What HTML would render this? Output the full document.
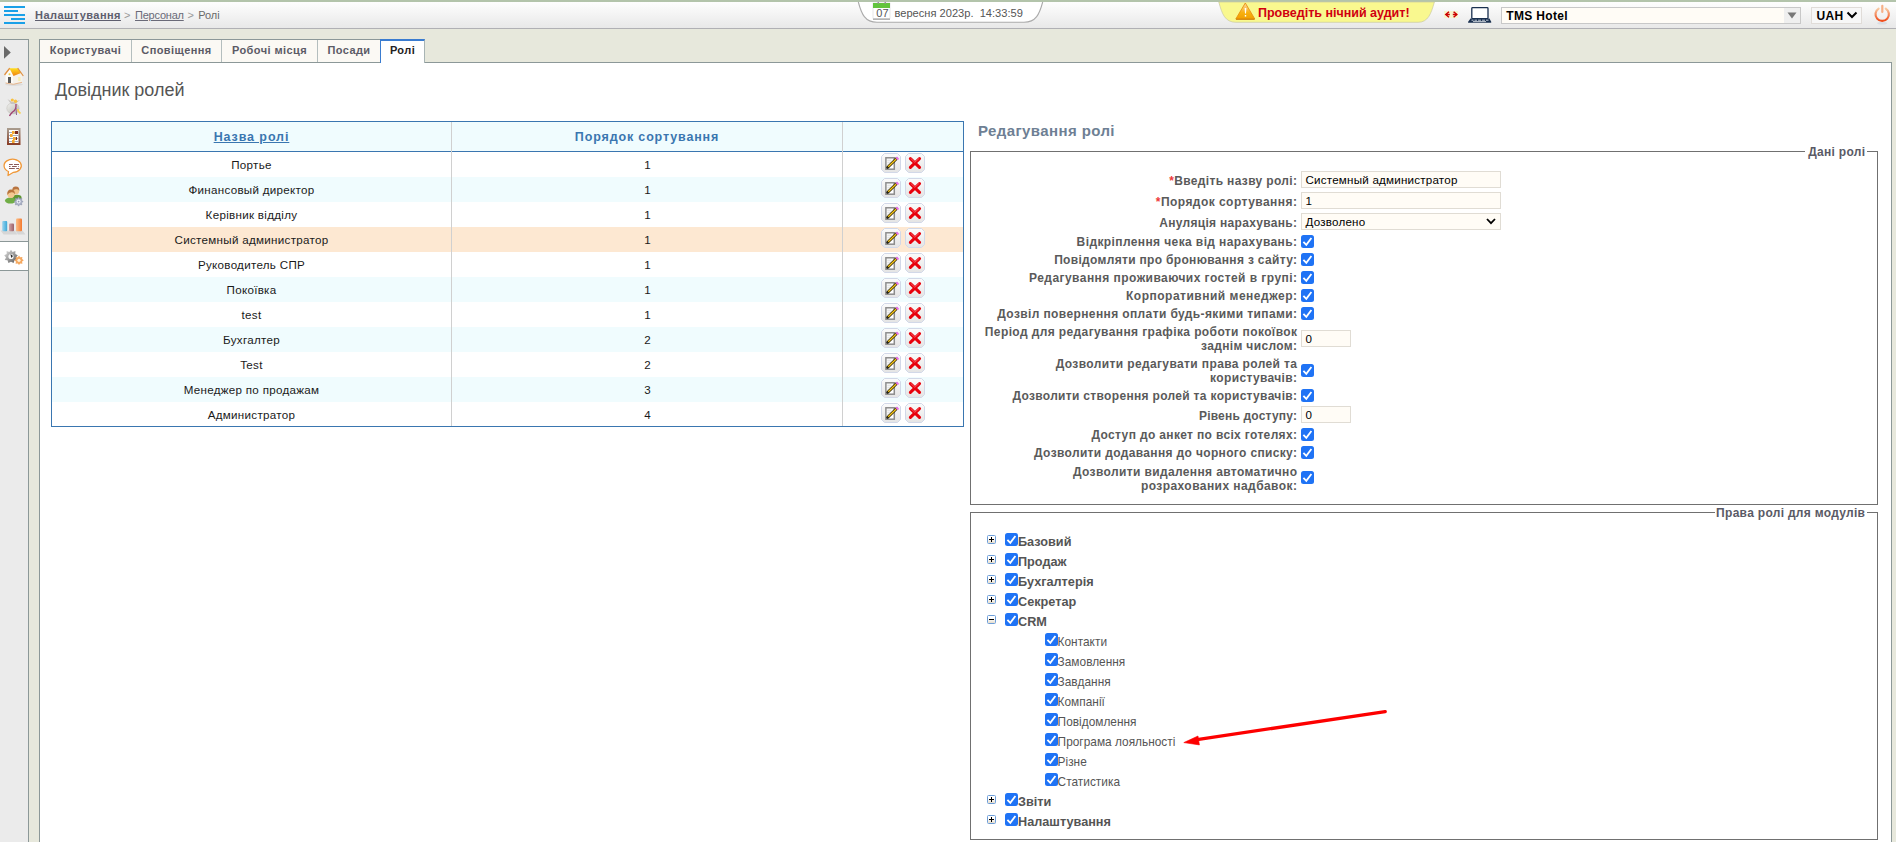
<!DOCTYPE html>
<html><head><meta charset="utf-8">
<style>
*{box-sizing:border-box}
html,body{margin:0;padding:0;width:1896px;height:842px;overflow:hidden;background:#e7e8dc;font-family:"Liberation Sans",sans-serif;position:relative}
.a{position:absolute}
.t{white-space:nowrap}
svg{display:block}
</style></head><body><svg width="0" height="0" style="position:absolute"><defs><linearGradient id="bg" x1="0" y1="0" x2="0" y2="1"><stop offset="0" stop-color="#fbfbfb"/><stop offset="1" stop-color="#e4e4e4"/></linearGradient></defs></svg>

<div class="a" style="left:0px;top:0px;width:1896px;height:2px;background:#b3c4ab"></div>
<div class="a" style="left:0px;top:2px;width:1896px;height:27px;background:linear-gradient(#fefefe,#e8e8e8);border-bottom:1px solid #b0b0b4"></div>
<div class="a" style="left:4px;top:6px;width:21px;height:2px;background:#1aa0e8"></div>
<div class="a" style="left:4px;top:10px;width:14px;height:2px;background:#1aa0e8"></div>
<div class="a" style="left:4px;top:14px;width:21px;height:2px;background:#1aa0e8"></div>
<div class="a" style="left:11px;top:18px;width:14px;height:2px;background:#1aa0e8"></div>
<div class="a" style="left:4px;top:22px;width:21px;height:2px;background:#1aa0e8"></div>
<div class="a t" style="top:9.69px;font-size:11px;line-height:11px;font-weight:700;color:#5e5e6e;letter-spacing:0.45px;left:35px;"><span style="text-decoration:underline">Налаштування</span></div>
<div class="a t" style="top:9.69px;font-size:11px;line-height:11px;font-weight:400;color:#999;left:124px;">&gt;</div>
<div class="a t" style="top:9.69px;font-size:11px;line-height:11px;font-weight:400;color:#6a6a78;letter-spacing:-0.22px;left:135px;"><span style="text-decoration:underline">Персонал</span></div>
<div class="a t" style="top:9.69px;font-size:11px;line-height:11px;font-weight:400;color:#999;left:187.5px;">&gt;</div>
<div class="a t" style="top:9.69px;font-size:11px;line-height:11px;font-weight:400;color:#6a6a6a;letter-spacing:-0.1px;left:198.3px;">Ролі</div>
<svg class="a" style="left:850px;top:0" width="200" height="26" viewBox="850 0 200 26"><path d="M858.3 2 C861.5 14, 865 22.3, 877 22.3 L1024 22.3 C1036 22.3, 1039.5 14, 1042.7 2" fill="#fff" stroke="#ababab" stroke-width="1.1"/></svg>
<svg class="a" style="left:871px;top:1px" width="22" height="21" viewBox="871 1 22 21"><rect x="873" y="18" width="17" height="1.5" fill="#6a6a6a"/><rect x="873" y="3" width="17" height="15.5" fill="#fff" stroke="#d8d8d8" stroke-width="0.6"/><rect x="873" y="3" width="17" height="5" fill="#62c43c"/><rect x="877.5" y="2" width="1.5" height="1.5" fill="#a090a8"/><rect x="884.5" y="2" width="1.5" height="1.5" fill="#a090a8"/></svg>
<div class="a t" style="top:7.69px;font-size:11px;line-height:11px;font-weight:400;color:#555;left:876.3px;">07</div>
<div class="a t" style="top:7.60px;font-size:11.1px;line-height:11.1px;font-weight:400;color:#555;left:894.5px;">вересня&nbsp;2023р.&nbsp;&nbsp;14:33:59</div>
<svg class="a" style="left:1210px;top:0" width="235" height="26" viewBox="1210 0 235 26"><path d="M1218.8 2 C1222 14, 1225 22.3, 1236 22.3 L1418 22.3 C1428 22.3, 1431 14, 1434.4 2 Z" fill="#f9f88f" stroke="#c8c8a0" stroke-width="0.7"/></svg>
<svg class="a" style="left:1234px;top:1px" width="23" height="20" viewBox="1234 1 23 20"><defs><linearGradient id="wtri" x1="0" y1="0" x2="0" y2="1"><stop offset="0" stop-color="#fcd8a8"/><stop offset="0.6" stop-color="#f8b010"/><stop offset="1" stop-color="#f0a000"/></linearGradient></defs><path d="M1245.3 3 L1254.8 19 L1235.8 19 Z" fill="url(#wtri)" stroke="#e89010" stroke-width="0.9" stroke-linejoin="round"/><path d="M1236 19.3 H1254.5" stroke="#c87800" stroke-width="0.9"/><path d="M1244.6 8 H1246.4 L1246 13.6 H1245 Z" fill="#fff"/><rect x="1244.8" y="15" width="1.4" height="1.6" fill="#fff"/></svg>
<div class="a t" style="top:7.42px;font-size:12.5px;line-height:12.5px;font-weight:700;color:#d00010;left:1258px;">Проведіть нічний аудит!</div>
<div class="a" style="left:1444px;top:11px;width:14px;height:7px;background:#f6f4cc"></div>
<svg class="a" style="left:1440px;top:8px" width="22" height="13" viewBox="1440 8 22 13"><path d="M1449 11.8 L1445.8 14.5 L1449 17.2 M1453.6 11.8 L1456.8 14.5 L1453.6 17.2" fill="none" stroke="#cc0000" stroke-width="1.5"/><path d="M1446 14.5 H1449.8 M1452.8 14.5 H1456.6" stroke="#cc0000" stroke-width="1.5"/></svg>
<svg class="a" style="left:1466px;top:5px" width="27" height="19" viewBox="1466 5 27 19"><rect x="1471.8" y="7.6" width="16.2" height="11" rx="0.8" fill="#fff" stroke="#1a3050" stroke-width="1.3"/><path d="M1470.5 18.6 L1489.5 18.6 L1491.3 22 Q1491.5 22.7 1490.6 22.7 L1468.6 22.7 Q1467.7 22.7 1468 22 Z" fill="#1a3050"/><path d="M1471.5 20.2 H1473.5 M1474.5 20.2 H1477 M1478 20.2 H1481 M1482 20.2 H1485 M1486 20.2 H1488.5 M1473 21.6 H1486" stroke="#e8eef4" stroke-width="0.8"/></svg>
<div class="a" style="left:1501px;top:7px;width:300px;height:17px;background:#fffcf6;border:1px solid #c8c8c8"></div>
<div class="a" style="left:1784px;top:8px;width:16px;height:15px;background:#efefef"></div>
<svg class="a" style="left:1787px;top:12px" width="10" height="7" viewBox="0 0 10 7"><path d="M0.5 0.5 L9.5 0.5 L5 6.5 Z" fill="#777"/></svg>
<div class="a t" style="top:10.34px;font-size:12px;line-height:12px;font-weight:700;color:#000;letter-spacing:0.33px;left:1506.3px;">TMS Hotel</div>
<div class="a" style="left:1811px;top:7px;width:51px;height:17px;background:#f7f7f7;border:1px solid #e0dcd8"></div>
<div class="a t" style="top:10.34px;font-size:12px;line-height:12px;font-weight:700;color:#000;letter-spacing:0.3px;left:1816.5px;">UAH</div>
<svg class="a" style="left:1846px;top:11px" width="12" height="9" viewBox="0 0 12 9"><path d="M1.5 1.5 L6 6 L10.5 1.5" fill="none" stroke="#000" stroke-width="2"/></svg>
<svg class="a" style="left:1872px;top:4px" width="21" height="22" viewBox="1872 4 21 22"><defs><linearGradient id="pw" x1="0" y1="0" x2="0" y2="1"><stop offset="0" stop-color="#f8c8a0"/><stop offset="1" stop-color="#f04a18"/></linearGradient></defs><ellipse cx="1882.2" cy="23.3" rx="5" ry="1.3" fill="#d8dde4"/><path d="M1878.6 8.6 A6.7 6.7 0 1 0 1885.8 8.6" fill="none" stroke="url(#pw)" stroke-width="2.2" stroke-linecap="round"/><path d="M1882.3 5.8 V12" stroke="#f6b088" stroke-width="2.2" stroke-linecap="round"/></svg>
<div class="a" style="left:0px;top:39px;width:29px;height:803px;background:#ebebeb;border-top:1px solid #8c9898;border-right:1px solid #8c9898"></div>
<div class="a" style="left:0px;top:241px;width:28px;height:30px;background:#fff;border-top:1px solid #8c9898;border-bottom:1px solid #8c9898"></div>
<svg class="a" style="left:0;top:39px" width="28" height="240" viewBox="0 39 28 240">
<defs>
<linearGradient id="roof" x1="0" y1="0" x2="0" y2="1"><stop offset="0" stop-color="#ffe020"/><stop offset="1" stop-color="#f08010"/></linearGradient>
<linearGradient id="frame" x1="0" y1="0" x2="0" y2="1"><stop offset="0" stop-color="#a89a8c"/><stop offset="1" stop-color="#8a4028"/></linearGradient>
<linearGradient id="bag" x1="0" y1="0" x2="1" y2="1"><stop offset="0" stop-color="#f2f2f0"/><stop offset="1" stop-color="#b8b8b0"/></linearGradient>
</defs>
<path d="M4 46 L10.8 52.4 L4 58.8 Z" fill="#6a6a6a"/>
<!-- house -->
<ellipse cx="14" cy="84.5" rx="9" ry="1.5" fill="#dcdcdc"/>
<path d="M5.5 74 L9.5 69 L13.5 75.5 L13.5 84 L5.5 82.5 Z" fill="#fdfcf8"/>
<path d="M13.5 75.5 L20.5 73.5 L22.5 75.5 L22.5 82 L13.5 84 Z" fill="#f6f2ea"/>
<path d="M4.8 74.5 L9.5 68.5" stroke="#e09040" stroke-width="1.3" stroke-linecap="round"/>
<path d="M9.5 68.2 L18 68.2 L21 73 L13.5 76 Z" fill="url(#roof)"/>
<path d="M18 68.5 L23 75.5" stroke="#e09040" stroke-width="1.2" stroke-linecap="round"/>
<path d="M5.5 83 L13.5 84.3 L22 82.3" fill="none" stroke="#e8b080" stroke-width="0.9"/>
<rect x="8" y="77" width="3" height="6" fill="#5a5a5a"/>
<rect x="18.2" y="77" width="2.3" height="4" fill="#f8eeb0"/>
<circle cx="9.5" cy="74.2" r="1" fill="#f0d040"/>
<!-- bag -->
<ellipse cx="13" cy="108.3" rx="6.2" ry="5.6" fill="url(#bag)" stroke="#c0beb8" stroke-width="0.5"/>
<path d="M7.5 99 L12 102 L14 102 L20 100 L15 104 L11 104 Z" fill="#c8c4c0"/>
<circle cx="12.3" cy="100" r="1.6" fill="#f8c040"/><circle cx="15.5" cy="101.2" r="1.7" fill="#f8c040"/>
<path d="M16 104 Q16.5 110 12.5 112 Q10.5 114 9.5 116" fill="none" stroke="#a04070" stroke-width="1.3"/>
<path d="M16 108 L16.5 115" stroke="#906090" stroke-width="1"/>
<path d="M17.6 109 Q18 112 20.5 113.5" fill="none" stroke="#f8d050" stroke-width="1.8"/>
<!-- abacus -->
<rect x="8" y="129" width="11.5" height="15" fill="#fff" stroke="url(#frame)" stroke-width="2"/>
<path d="M9 132.5 H18.5 M9 135.5 H18.5 M9 138.5 H18.5 M9 141.5 H18.5" stroke="#9aa6b8" stroke-width="0.9"/>
<rect x="12" y="131" width="2.6" height="3" fill="#f4a830"/><rect x="15" y="131" width="3" height="3" fill="#7a2a20"/>
<rect x="10" y="134" width="2.6" height="3" fill="#f4a830"/>
<rect x="13" y="137" width="2.6" height="3" fill="#f4a830"/><rect x="15.8" y="137" width="1.2" height="3" fill="#7a2a20"/>
<rect x="12" y="140" width="2.6" height="3" fill="#f4a830"/>
<!-- speech -->
<path d="M8.5 171.5 A8.6 6.6 0 1 1 13.5 172.3 L8 175.5 Z" fill="#fff" stroke="#f09838" stroke-width="1.3" stroke-linejoin="round"/>
<path d="M9 164.5 H12.8 M14 164.5 H19 M9 166.5 H10.5 M12 166.5 H16.8 M18.3 166.5 H19 M9 168.5 H14.8 M16.2 168.5 H19" stroke="#8a5a58" stroke-width="1"/>
<!-- users -->
<ellipse cx="17" cy="197.8" rx="4.6" ry="3" fill="#5f9632"/>
<circle cx="15.8" cy="191" r="3.4" fill="#f2c48a"/>
<path d="M12.3 191 Q12 186.6 15.8 186.6 Q19.6 186.6 19.3 191 Q18.5 189 16.5 189.3 Q14 189 12.3 191 Z" fill="#b87440"/>
<ellipse cx="10.4" cy="200.6" rx="5.4" ry="3" fill="#70ad45"/>
<circle cx="11" cy="194.3" r="3.6" fill="#f4c890"/>
<path d="M7.3 195 Q6.8 189.5 11 189.5 Q15.2 189.5 14.8 194.5 Q14 192 11.8 192.2 Q9 192 7.3 195 Z" fill="#b8743c"/>
<g transform="translate(18.6 201.6)"><path d="M0 -4.6 L1.2 -2.9 L3.3 -3.3 L2.9 -1.2 L4.6 0 L2.9 1.2 L3.3 3.3 L1.2 2.9 L0 4.6 L-1.2 2.9 L-3.3 3.3 L-2.9 1.2 L-4.6 0 L-2.9 -1.2 L-3.3 -3.3 L-1.2 -2.9 Z" fill="#a8aec4" stroke="#8890a8" stroke-width="0.5"/><circle r="2" fill="#eef0f6"/><circle r="0.9" fill="#9098b0"/></g>
<!-- chart -->
<linearGradient id="cb1" x1="0" x2="1"><stop offset="0" stop-color="#9ad4ee"/><stop offset="1" stop-color="#3aa8d8"/></linearGradient>
<linearGradient id="cb2" x1="0" x2="1"><stop offset="0" stop-color="#d0a4a8"/><stop offset="1" stop-color="#9a6068"/></linearGradient>
<linearGradient id="cb3" x1="0" x2="1"><stop offset="0" stop-color="#fcc088"/><stop offset="1" stop-color="#f47a30"/></linearGradient>
<path d="M0.5 230.5 L8 230.5 L11 234.5 L3.5 234.5 Z M8 230.5 L14.5 230.5 L17.5 234.5 L11 234.5 Z M15 230.5 L22.5 230.5 L25.5 234.5 L18 234.5 Z" fill="#d6d6d6"/>
<rect x="2.2" y="221" width="5" height="10.3" rx="1" fill="url(#cb1)"/>
<rect x="9" y="223.5" width="5" height="7.8" rx="1" fill="url(#cb2)"/>
<rect x="16" y="218.5" width="6" height="12.8" rx="1" fill="url(#cb3)"/>
<!-- gears -->
<linearGradient id="gg" x1="0" y1="0" x2="1" y2="1"><stop offset="0" stop-color="#e4e4e4"/><stop offset="1" stop-color="#555"/></linearGradient>
<g transform="translate(11 256.5)"><path d="M0 -6.8 L1.6 -4.6 L4.4 -5.4 L4.3 -2.6 L6.8 -1.2 L5 0.9 L6.3 3.5 L3.5 3.8 L2.6 6.5 L0 5.2 L-2.6 6.5 L-3.5 3.8 L-6.3 3.5 L-5 0.9 L-6.8 -1.2 L-4.3 -2.6 L-4.4 -5.4 L-1.6 -4.6 Z" fill="url(#gg)"/><circle r="2.6" fill="#f8f8f8"/><path d="M-0.5 -2.4 L2 -0.5 L0.3 1.5 Z" fill="#222"/></g>
<g transform="translate(19 260.3)"><path d="M0 -4.8 L1.2 -3.1 L3.4 -3.4 L3.1 -1.2 L4.8 0 L3.1 1.2 L3.4 3.4 L1.2 3.1 L0 4.8 L-1.2 3.1 L-3.4 3.4 L-3.1 1.2 L-4.8 0 L-3.1 -1.2 L-3.4 -3.4 L-1.2 -3.1 Z" fill="#f4a860"/><circle r="1.6" fill="#fff0d8"/></g>
</svg>
<div class="a" style="left:39px;top:62px;width:1853px;height:790px;background:#fff;border:1px solid #8c9898"></div>
<div class="a" style="left:39px;top:39px;width:341px;height:1px;background:#8c9898"></div>
<div class="a" style="left:39px;top:40px;width:93px;height:22px;background:#fbf9f4;border-left:1px solid #b4bebe;border-right:1px solid #b4bebe"></div>
<div class="a t" style="top:45.19px;font-size:11px;line-height:11px;font-weight:700;color:#5b5b66;letter-spacing:0.42px;left:-314.5px;width:800px;text-align:center;">Користувачі</div>
<div class="a" style="left:131px;top:40px;width:91px;height:22px;background:#fbf9f4;border-left:1px solid #b4bebe;border-right:1px solid #b4bebe"></div>
<div class="a t" style="top:45.19px;font-size:11px;line-height:11px;font-weight:700;color:#5b5b66;letter-spacing:0.42px;left:-223.5px;width:800px;text-align:center;">Сповіщення</div>
<div class="a" style="left:221px;top:40px;width:97px;height:22px;background:#fbf9f4;border-left:1px solid #b4bebe;border-right:1px solid #b4bebe"></div>
<div class="a t" style="top:45.19px;font-size:11px;line-height:11px;font-weight:700;color:#5b5b66;letter-spacing:0.42px;left:-130.5px;width:800px;text-align:center;">Робочі місця</div>
<div class="a" style="left:317px;top:40px;width:64px;height:22px;background:#fbf9f4;border-left:1px solid #b4bebe;border-right:1px solid #b4bebe"></div>
<div class="a t" style="top:45.19px;font-size:11px;line-height:11px;font-weight:700;color:#5b5b66;letter-spacing:0.42px;left:-51.0px;width:800px;text-align:center;">Посади</div>
<div class="a" style="left:39px;top:39px;width:1px;height:23px;background:#8c9898"></div>
<div class="a" style="left:380px;top:39px;width:45px;height:24px;background:#fff;border-left:1px solid #3a7cd0;border-right:1px solid #a8b4b4;border-top:2px solid #3a7cd0"></div>
<div class="a t" style="top:45.19px;font-size:11px;line-height:11px;font-weight:700;color:#222;letter-spacing:0.42px;left:2.5px;width:800px;text-align:center;">Ролі</div>
<div class="a t" style="top:80.76px;font-size:18px;line-height:18px;font-weight:400;color:#555;left:55px;">Довідник ролей</div>
<div class="a" style="left:51px;top:121px;width:913px;height:306px;border:1px solid #3a76b0;background:#fff"></div>
<div class="a" style="left:52px;top:122px;width:911px;height:29px;background:#f0fcfe"></div>
<div class="a" style="left:52px;top:151px;width:911px;height:1px;background:#3a76b0"></div>
<div class="a t" style="top:159.08px;font-size:11.6px;line-height:11.6px;font-weight:400;color:#1a1a1a;letter-spacing:0.3px;left:-148.5px;width:800px;text-align:center;">Портье</div>
<div class="a t" style="top:159.08px;font-size:11.6px;line-height:11.6px;font-weight:400;color:#1a1a1a;left:247.5px;width:800px;text-align:center;">1</div>
<div class="a" style="left:881px;top:153px"><svg width="20" height="20" viewBox="0 0 20 20"><path d="M3.5 0.5 H16.5 L19.5 3.5 V16.5 L16.5 19.5 H3.5 L0.5 16.5 V3.5 Z" fill="url(#bg)" stroke="#d2d8e8"/><rect x="4.9" y="4.8" width="8.4" height="11.4" fill="#fff" stroke="#8c8c8c" stroke-width="1.5"/><path d="M6.2 7.2 H10.5 M6.2 9.2 H10 M6.2 11.2 H8.5" stroke="#d0d0d0" stroke-width="0.8"/><path d="M6.8 14.2 L15.6 5.6" stroke="#2a2000" stroke-width="2.8" stroke-linecap="round"/><path d="M7.2 13.8 L15.2 6" stroke="#f8c818" stroke-width="1.3"/><path d="M15.2 4.2 L17.5 6.5" stroke="#e878e8" stroke-width="2.2"/><circle cx="6.3" cy="14.7" r="0.9" fill="#222"/></svg></div>
<div class="a" style="left:905px;top:153px"><svg width="20" height="20" viewBox="0 0 20 20"><path d="M3.5 0.5 H16.5 L19.5 3.5 V16.5 L16.5 19.5 H3.5 L0.5 16.5 V3.5 Z" fill="url(#bg)" stroke="#d2d8e8"/><path d="M5.4 5.6 L14.5 14.4 M14.5 5.6 L5.4 14.4" stroke="#e8000c" stroke-width="3.1" stroke-linecap="round"/><path d="M5.6 5.3 L9.8 9.3 L14.2 5.3" fill="none" stroke="#ff9aa0" stroke-width="0.8" opacity="0.7"/></svg></div>
<div class="a" style="left:52px;top:177px;width:911px;height:25px;background:#f0fcfe"></div>
<div class="a t" style="top:184.08px;font-size:11.6px;line-height:11.6px;font-weight:400;color:#1a1a1a;letter-spacing:0.3px;left:-148.5px;width:800px;text-align:center;">Финансовый директор</div>
<div class="a t" style="top:184.08px;font-size:11.6px;line-height:11.6px;font-weight:400;color:#1a1a1a;left:247.5px;width:800px;text-align:center;">1</div>
<div class="a" style="left:881px;top:178px"><svg width="20" height="20" viewBox="0 0 20 20"><path d="M3.5 0.5 H16.5 L19.5 3.5 V16.5 L16.5 19.5 H3.5 L0.5 16.5 V3.5 Z" fill="url(#bg)" stroke="#d2d8e8"/><rect x="4.9" y="4.8" width="8.4" height="11.4" fill="#fff" stroke="#8c8c8c" stroke-width="1.5"/><path d="M6.2 7.2 H10.5 M6.2 9.2 H10 M6.2 11.2 H8.5" stroke="#d0d0d0" stroke-width="0.8"/><path d="M6.8 14.2 L15.6 5.6" stroke="#2a2000" stroke-width="2.8" stroke-linecap="round"/><path d="M7.2 13.8 L15.2 6" stroke="#f8c818" stroke-width="1.3"/><path d="M15.2 4.2 L17.5 6.5" stroke="#e878e8" stroke-width="2.2"/><circle cx="6.3" cy="14.7" r="0.9" fill="#222"/></svg></div>
<div class="a" style="left:905px;top:178px"><svg width="20" height="20" viewBox="0 0 20 20"><path d="M3.5 0.5 H16.5 L19.5 3.5 V16.5 L16.5 19.5 H3.5 L0.5 16.5 V3.5 Z" fill="url(#bg)" stroke="#d2d8e8"/><path d="M5.4 5.6 L14.5 14.4 M14.5 5.6 L5.4 14.4" stroke="#e8000c" stroke-width="3.1" stroke-linecap="round"/><path d="M5.6 5.3 L9.8 9.3 L14.2 5.3" fill="none" stroke="#ff9aa0" stroke-width="0.8" opacity="0.7"/></svg></div>
<div class="a t" style="top:209.08px;font-size:11.6px;line-height:11.6px;font-weight:400;color:#1a1a1a;letter-spacing:0.3px;left:-148.5px;width:800px;text-align:center;">Керівник відділу</div>
<div class="a t" style="top:209.08px;font-size:11.6px;line-height:11.6px;font-weight:400;color:#1a1a1a;left:247.5px;width:800px;text-align:center;">1</div>
<div class="a" style="left:881px;top:203px"><svg width="20" height="20" viewBox="0 0 20 20"><path d="M3.5 0.5 H16.5 L19.5 3.5 V16.5 L16.5 19.5 H3.5 L0.5 16.5 V3.5 Z" fill="url(#bg)" stroke="#d2d8e8"/><rect x="4.9" y="4.8" width="8.4" height="11.4" fill="#fff" stroke="#8c8c8c" stroke-width="1.5"/><path d="M6.2 7.2 H10.5 M6.2 9.2 H10 M6.2 11.2 H8.5" stroke="#d0d0d0" stroke-width="0.8"/><path d="M6.8 14.2 L15.6 5.6" stroke="#2a2000" stroke-width="2.8" stroke-linecap="round"/><path d="M7.2 13.8 L15.2 6" stroke="#f8c818" stroke-width="1.3"/><path d="M15.2 4.2 L17.5 6.5" stroke="#e878e8" stroke-width="2.2"/><circle cx="6.3" cy="14.7" r="0.9" fill="#222"/></svg></div>
<div class="a" style="left:905px;top:203px"><svg width="20" height="20" viewBox="0 0 20 20"><path d="M3.5 0.5 H16.5 L19.5 3.5 V16.5 L16.5 19.5 H3.5 L0.5 16.5 V3.5 Z" fill="url(#bg)" stroke="#d2d8e8"/><path d="M5.4 5.6 L14.5 14.4 M14.5 5.6 L5.4 14.4" stroke="#e8000c" stroke-width="3.1" stroke-linecap="round"/><path d="M5.6 5.3 L9.8 9.3 L14.2 5.3" fill="none" stroke="#ff9aa0" stroke-width="0.8" opacity="0.7"/></svg></div>
<div class="a" style="left:52px;top:227px;width:911px;height:25px;background:#fde8d2"></div>
<div class="a t" style="top:234.08px;font-size:11.6px;line-height:11.6px;font-weight:400;color:#1a1a1a;letter-spacing:0.3px;left:-148.5px;width:800px;text-align:center;">Системный администратор</div>
<div class="a t" style="top:234.08px;font-size:11.6px;line-height:11.6px;font-weight:400;color:#1a1a1a;left:247.5px;width:800px;text-align:center;">1</div>
<div class="a" style="left:881px;top:228px"><svg width="20" height="20" viewBox="0 0 20 20"><path d="M3.5 0.5 H16.5 L19.5 3.5 V16.5 L16.5 19.5 H3.5 L0.5 16.5 V3.5 Z" fill="url(#bg)" stroke="#d2d8e8"/><rect x="4.9" y="4.8" width="8.4" height="11.4" fill="#fff" stroke="#8c8c8c" stroke-width="1.5"/><path d="M6.2 7.2 H10.5 M6.2 9.2 H10 M6.2 11.2 H8.5" stroke="#d0d0d0" stroke-width="0.8"/><path d="M6.8 14.2 L15.6 5.6" stroke="#2a2000" stroke-width="2.8" stroke-linecap="round"/><path d="M7.2 13.8 L15.2 6" stroke="#f8c818" stroke-width="1.3"/><path d="M15.2 4.2 L17.5 6.5" stroke="#e878e8" stroke-width="2.2"/><circle cx="6.3" cy="14.7" r="0.9" fill="#222"/></svg></div>
<div class="a" style="left:905px;top:228px"><svg width="20" height="20" viewBox="0 0 20 20"><path d="M3.5 0.5 H16.5 L19.5 3.5 V16.5 L16.5 19.5 H3.5 L0.5 16.5 V3.5 Z" fill="url(#bg)" stroke="#d2d8e8"/><path d="M5.4 5.6 L14.5 14.4 M14.5 5.6 L5.4 14.4" stroke="#e8000c" stroke-width="3.1" stroke-linecap="round"/><path d="M5.6 5.3 L9.8 9.3 L14.2 5.3" fill="none" stroke="#ff9aa0" stroke-width="0.8" opacity="0.7"/></svg></div>
<div class="a t" style="top:259.08px;font-size:11.6px;line-height:11.6px;font-weight:400;color:#1a1a1a;letter-spacing:0.3px;left:-148.5px;width:800px;text-align:center;">Руководитель СПР</div>
<div class="a t" style="top:259.08px;font-size:11.6px;line-height:11.6px;font-weight:400;color:#1a1a1a;left:247.5px;width:800px;text-align:center;">1</div>
<div class="a" style="left:881px;top:253px"><svg width="20" height="20" viewBox="0 0 20 20"><path d="M3.5 0.5 H16.5 L19.5 3.5 V16.5 L16.5 19.5 H3.5 L0.5 16.5 V3.5 Z" fill="url(#bg)" stroke="#d2d8e8"/><rect x="4.9" y="4.8" width="8.4" height="11.4" fill="#fff" stroke="#8c8c8c" stroke-width="1.5"/><path d="M6.2 7.2 H10.5 M6.2 9.2 H10 M6.2 11.2 H8.5" stroke="#d0d0d0" stroke-width="0.8"/><path d="M6.8 14.2 L15.6 5.6" stroke="#2a2000" stroke-width="2.8" stroke-linecap="round"/><path d="M7.2 13.8 L15.2 6" stroke="#f8c818" stroke-width="1.3"/><path d="M15.2 4.2 L17.5 6.5" stroke="#e878e8" stroke-width="2.2"/><circle cx="6.3" cy="14.7" r="0.9" fill="#222"/></svg></div>
<div class="a" style="left:905px;top:253px"><svg width="20" height="20" viewBox="0 0 20 20"><path d="M3.5 0.5 H16.5 L19.5 3.5 V16.5 L16.5 19.5 H3.5 L0.5 16.5 V3.5 Z" fill="url(#bg)" stroke="#d2d8e8"/><path d="M5.4 5.6 L14.5 14.4 M14.5 5.6 L5.4 14.4" stroke="#e8000c" stroke-width="3.1" stroke-linecap="round"/><path d="M5.6 5.3 L9.8 9.3 L14.2 5.3" fill="none" stroke="#ff9aa0" stroke-width="0.8" opacity="0.7"/></svg></div>
<div class="a" style="left:52px;top:277px;width:911px;height:25px;background:#f0fcfe"></div>
<div class="a t" style="top:284.08px;font-size:11.6px;line-height:11.6px;font-weight:400;color:#1a1a1a;letter-spacing:0.3px;left:-148.5px;width:800px;text-align:center;">Покоївка</div>
<div class="a t" style="top:284.08px;font-size:11.6px;line-height:11.6px;font-weight:400;color:#1a1a1a;left:247.5px;width:800px;text-align:center;">1</div>
<div class="a" style="left:881px;top:278px"><svg width="20" height="20" viewBox="0 0 20 20"><path d="M3.5 0.5 H16.5 L19.5 3.5 V16.5 L16.5 19.5 H3.5 L0.5 16.5 V3.5 Z" fill="url(#bg)" stroke="#d2d8e8"/><rect x="4.9" y="4.8" width="8.4" height="11.4" fill="#fff" stroke="#8c8c8c" stroke-width="1.5"/><path d="M6.2 7.2 H10.5 M6.2 9.2 H10 M6.2 11.2 H8.5" stroke="#d0d0d0" stroke-width="0.8"/><path d="M6.8 14.2 L15.6 5.6" stroke="#2a2000" stroke-width="2.8" stroke-linecap="round"/><path d="M7.2 13.8 L15.2 6" stroke="#f8c818" stroke-width="1.3"/><path d="M15.2 4.2 L17.5 6.5" stroke="#e878e8" stroke-width="2.2"/><circle cx="6.3" cy="14.7" r="0.9" fill="#222"/></svg></div>
<div class="a" style="left:905px;top:278px"><svg width="20" height="20" viewBox="0 0 20 20"><path d="M3.5 0.5 H16.5 L19.5 3.5 V16.5 L16.5 19.5 H3.5 L0.5 16.5 V3.5 Z" fill="url(#bg)" stroke="#d2d8e8"/><path d="M5.4 5.6 L14.5 14.4 M14.5 5.6 L5.4 14.4" stroke="#e8000c" stroke-width="3.1" stroke-linecap="round"/><path d="M5.6 5.3 L9.8 9.3 L14.2 5.3" fill="none" stroke="#ff9aa0" stroke-width="0.8" opacity="0.7"/></svg></div>
<div class="a t" style="top:309.08px;font-size:11.6px;line-height:11.6px;font-weight:400;color:#1a1a1a;letter-spacing:0.3px;left:-148.5px;width:800px;text-align:center;">test</div>
<div class="a t" style="top:309.08px;font-size:11.6px;line-height:11.6px;font-weight:400;color:#1a1a1a;left:247.5px;width:800px;text-align:center;">1</div>
<div class="a" style="left:881px;top:303px"><svg width="20" height="20" viewBox="0 0 20 20"><path d="M3.5 0.5 H16.5 L19.5 3.5 V16.5 L16.5 19.5 H3.5 L0.5 16.5 V3.5 Z" fill="url(#bg)" stroke="#d2d8e8"/><rect x="4.9" y="4.8" width="8.4" height="11.4" fill="#fff" stroke="#8c8c8c" stroke-width="1.5"/><path d="M6.2 7.2 H10.5 M6.2 9.2 H10 M6.2 11.2 H8.5" stroke="#d0d0d0" stroke-width="0.8"/><path d="M6.8 14.2 L15.6 5.6" stroke="#2a2000" stroke-width="2.8" stroke-linecap="round"/><path d="M7.2 13.8 L15.2 6" stroke="#f8c818" stroke-width="1.3"/><path d="M15.2 4.2 L17.5 6.5" stroke="#e878e8" stroke-width="2.2"/><circle cx="6.3" cy="14.7" r="0.9" fill="#222"/></svg></div>
<div class="a" style="left:905px;top:303px"><svg width="20" height="20" viewBox="0 0 20 20"><path d="M3.5 0.5 H16.5 L19.5 3.5 V16.5 L16.5 19.5 H3.5 L0.5 16.5 V3.5 Z" fill="url(#bg)" stroke="#d2d8e8"/><path d="M5.4 5.6 L14.5 14.4 M14.5 5.6 L5.4 14.4" stroke="#e8000c" stroke-width="3.1" stroke-linecap="round"/><path d="M5.6 5.3 L9.8 9.3 L14.2 5.3" fill="none" stroke="#ff9aa0" stroke-width="0.8" opacity="0.7"/></svg></div>
<div class="a" style="left:52px;top:327px;width:911px;height:25px;background:#f0fcfe"></div>
<div class="a t" style="top:334.08px;font-size:11.6px;line-height:11.6px;font-weight:400;color:#1a1a1a;letter-spacing:0.3px;left:-148.5px;width:800px;text-align:center;">Бухгалтер</div>
<div class="a t" style="top:334.08px;font-size:11.6px;line-height:11.6px;font-weight:400;color:#1a1a1a;left:247.5px;width:800px;text-align:center;">2</div>
<div class="a" style="left:881px;top:328px"><svg width="20" height="20" viewBox="0 0 20 20"><path d="M3.5 0.5 H16.5 L19.5 3.5 V16.5 L16.5 19.5 H3.5 L0.5 16.5 V3.5 Z" fill="url(#bg)" stroke="#d2d8e8"/><rect x="4.9" y="4.8" width="8.4" height="11.4" fill="#fff" stroke="#8c8c8c" stroke-width="1.5"/><path d="M6.2 7.2 H10.5 M6.2 9.2 H10 M6.2 11.2 H8.5" stroke="#d0d0d0" stroke-width="0.8"/><path d="M6.8 14.2 L15.6 5.6" stroke="#2a2000" stroke-width="2.8" stroke-linecap="round"/><path d="M7.2 13.8 L15.2 6" stroke="#f8c818" stroke-width="1.3"/><path d="M15.2 4.2 L17.5 6.5" stroke="#e878e8" stroke-width="2.2"/><circle cx="6.3" cy="14.7" r="0.9" fill="#222"/></svg></div>
<div class="a" style="left:905px;top:328px"><svg width="20" height="20" viewBox="0 0 20 20"><path d="M3.5 0.5 H16.5 L19.5 3.5 V16.5 L16.5 19.5 H3.5 L0.5 16.5 V3.5 Z" fill="url(#bg)" stroke="#d2d8e8"/><path d="M5.4 5.6 L14.5 14.4 M14.5 5.6 L5.4 14.4" stroke="#e8000c" stroke-width="3.1" stroke-linecap="round"/><path d="M5.6 5.3 L9.8 9.3 L14.2 5.3" fill="none" stroke="#ff9aa0" stroke-width="0.8" opacity="0.7"/></svg></div>
<div class="a t" style="top:359.08px;font-size:11.6px;line-height:11.6px;font-weight:400;color:#1a1a1a;letter-spacing:0.3px;left:-148.5px;width:800px;text-align:center;">Test</div>
<div class="a t" style="top:359.08px;font-size:11.6px;line-height:11.6px;font-weight:400;color:#1a1a1a;left:247.5px;width:800px;text-align:center;">2</div>
<div class="a" style="left:881px;top:353px"><svg width="20" height="20" viewBox="0 0 20 20"><path d="M3.5 0.5 H16.5 L19.5 3.5 V16.5 L16.5 19.5 H3.5 L0.5 16.5 V3.5 Z" fill="url(#bg)" stroke="#d2d8e8"/><rect x="4.9" y="4.8" width="8.4" height="11.4" fill="#fff" stroke="#8c8c8c" stroke-width="1.5"/><path d="M6.2 7.2 H10.5 M6.2 9.2 H10 M6.2 11.2 H8.5" stroke="#d0d0d0" stroke-width="0.8"/><path d="M6.8 14.2 L15.6 5.6" stroke="#2a2000" stroke-width="2.8" stroke-linecap="round"/><path d="M7.2 13.8 L15.2 6" stroke="#f8c818" stroke-width="1.3"/><path d="M15.2 4.2 L17.5 6.5" stroke="#e878e8" stroke-width="2.2"/><circle cx="6.3" cy="14.7" r="0.9" fill="#222"/></svg></div>
<div class="a" style="left:905px;top:353px"><svg width="20" height="20" viewBox="0 0 20 20"><path d="M3.5 0.5 H16.5 L19.5 3.5 V16.5 L16.5 19.5 H3.5 L0.5 16.5 V3.5 Z" fill="url(#bg)" stroke="#d2d8e8"/><path d="M5.4 5.6 L14.5 14.4 M14.5 5.6 L5.4 14.4" stroke="#e8000c" stroke-width="3.1" stroke-linecap="round"/><path d="M5.6 5.3 L9.8 9.3 L14.2 5.3" fill="none" stroke="#ff9aa0" stroke-width="0.8" opacity="0.7"/></svg></div>
<div class="a" style="left:52px;top:377px;width:911px;height:25px;background:#f0fcfe"></div>
<div class="a t" style="top:384.08px;font-size:11.6px;line-height:11.6px;font-weight:400;color:#1a1a1a;letter-spacing:0.3px;left:-148.5px;width:800px;text-align:center;">Менеджер по продажам</div>
<div class="a t" style="top:384.08px;font-size:11.6px;line-height:11.6px;font-weight:400;color:#1a1a1a;left:247.5px;width:800px;text-align:center;">3</div>
<div class="a" style="left:881px;top:378px"><svg width="20" height="20" viewBox="0 0 20 20"><path d="M3.5 0.5 H16.5 L19.5 3.5 V16.5 L16.5 19.5 H3.5 L0.5 16.5 V3.5 Z" fill="url(#bg)" stroke="#d2d8e8"/><rect x="4.9" y="4.8" width="8.4" height="11.4" fill="#fff" stroke="#8c8c8c" stroke-width="1.5"/><path d="M6.2 7.2 H10.5 M6.2 9.2 H10 M6.2 11.2 H8.5" stroke="#d0d0d0" stroke-width="0.8"/><path d="M6.8 14.2 L15.6 5.6" stroke="#2a2000" stroke-width="2.8" stroke-linecap="round"/><path d="M7.2 13.8 L15.2 6" stroke="#f8c818" stroke-width="1.3"/><path d="M15.2 4.2 L17.5 6.5" stroke="#e878e8" stroke-width="2.2"/><circle cx="6.3" cy="14.7" r="0.9" fill="#222"/></svg></div>
<div class="a" style="left:905px;top:378px"><svg width="20" height="20" viewBox="0 0 20 20"><path d="M3.5 0.5 H16.5 L19.5 3.5 V16.5 L16.5 19.5 H3.5 L0.5 16.5 V3.5 Z" fill="url(#bg)" stroke="#d2d8e8"/><path d="M5.4 5.6 L14.5 14.4 M14.5 5.6 L5.4 14.4" stroke="#e8000c" stroke-width="3.1" stroke-linecap="round"/><path d="M5.6 5.3 L9.8 9.3 L14.2 5.3" fill="none" stroke="#ff9aa0" stroke-width="0.8" opacity="0.7"/></svg></div>
<div class="a t" style="top:409.08px;font-size:11.6px;line-height:11.6px;font-weight:400;color:#1a1a1a;letter-spacing:0.3px;left:-148.5px;width:800px;text-align:center;">Администратор</div>
<div class="a t" style="top:409.08px;font-size:11.6px;line-height:11.6px;font-weight:400;color:#1a1a1a;left:247.5px;width:800px;text-align:center;">4</div>
<div class="a" style="left:881px;top:403px"><svg width="20" height="20" viewBox="0 0 20 20"><path d="M3.5 0.5 H16.5 L19.5 3.5 V16.5 L16.5 19.5 H3.5 L0.5 16.5 V3.5 Z" fill="url(#bg)" stroke="#d2d8e8"/><rect x="4.9" y="4.8" width="8.4" height="11.4" fill="#fff" stroke="#8c8c8c" stroke-width="1.5"/><path d="M6.2 7.2 H10.5 M6.2 9.2 H10 M6.2 11.2 H8.5" stroke="#d0d0d0" stroke-width="0.8"/><path d="M6.8 14.2 L15.6 5.6" stroke="#2a2000" stroke-width="2.8" stroke-linecap="round"/><path d="M7.2 13.8 L15.2 6" stroke="#f8c818" stroke-width="1.3"/><path d="M15.2 4.2 L17.5 6.5" stroke="#e878e8" stroke-width="2.2"/><circle cx="6.3" cy="14.7" r="0.9" fill="#222"/></svg></div>
<div class="a" style="left:905px;top:403px"><svg width="20" height="20" viewBox="0 0 20 20"><path d="M3.5 0.5 H16.5 L19.5 3.5 V16.5 L16.5 19.5 H3.5 L0.5 16.5 V3.5 Z" fill="url(#bg)" stroke="#d2d8e8"/><path d="M5.4 5.6 L14.5 14.4 M14.5 5.6 L5.4 14.4" stroke="#e8000c" stroke-width="3.1" stroke-linecap="round"/><path d="M5.6 5.3 L9.8 9.3 L14.2 5.3" fill="none" stroke="#ff9aa0" stroke-width="0.8" opacity="0.7"/></svg></div>
<div class="a" style="left:451px;top:122px;width:1px;height:304px;background:#d0d0d0"></div>
<div class="a" style="left:842px;top:122px;width:1px;height:304px;background:#d0d0d0"></div>
<div class="a t" style="top:131.42px;font-size:12.5px;line-height:12.5px;font-weight:700;color:#3a76b0;letter-spacing:0.9px;left:-148.5px;width:800px;text-align:center;"><span style="text-decoration:underline">Назва ролі</span></div>
<div class="a t" style="top:131.42px;font-size:12.5px;line-height:12.5px;font-weight:700;color:#3a76b0;letter-spacing:0.85px;left:247px;width:800px;text-align:center;">Порядок сортування</div>
<div class="a t" style="top:123.30px;font-size:15px;line-height:15px;font-weight:700;color:#6e7f94;letter-spacing:0.4px;left:978px;">Редагування ролі</div>
<div class="a" style="left:970px;top:151px;width:908px;height:354px;border:1px solid #707070"></div>
<div class="a" style="left:1805px;top:146px;width:62px;height:12px;background:#fff"></div>
<div class="a t" style="top:145.84px;font-size:12px;line-height:12px;font-weight:700;color:#5a5a66;letter-spacing:0.3px;right:31px;margin-right:-0.3px;">Дані ролі</div>
<div class="a t" style="top:174.84px;font-size:12px;line-height:12px;font-weight:700;color:#5a5a5a;letter-spacing:0.35px;right:599px;margin-right:-0.35px;"><span style="color:#ee3a3a">*</span>Введіть назву ролі:</div>
<div class="a" style="left:1301px;top:171px;width:200px;height:17px;background:#fffcf6;border:1px solid #e0dcd4"></div>
<div class="a t" style="top:174.08px;font-size:11.6px;line-height:11.6px;font-weight:400;color:#000;letter-spacing:0.22px;left:1305.5px;">Системный администратор</div>
<div class="a t" style="top:195.84px;font-size:12px;line-height:12px;font-weight:700;color:#5a5a5a;letter-spacing:0.46px;right:599px;margin-right:-0.46px;"><span style="color:#ee3a3a">*</span>Порядок сортування:</div>
<div class="a" style="left:1301px;top:192px;width:200px;height:17px;background:#fffcf6;border:1px solid #e0dcd4"></div>
<div class="a t" style="top:195.08px;font-size:11.6px;line-height:11.6px;font-weight:400;color:#000;letter-spacing:0.22px;left:1305.5px;">1</div>
<div class="a t" style="top:216.84px;font-size:12px;line-height:12px;font-weight:700;color:#5a5a5a;letter-spacing:0.3px;right:599px;margin-right:-0.3px;">Ануляція нарахувань:</div>
<div class="a" style="left:1301px;top:213px;width:200px;height:17px;background:#fffcf6;border:1px solid #e0dcd4"></div>
<div class="a t" style="top:216.08px;font-size:11.6px;line-height:11.6px;font-weight:400;color:#000;letter-spacing:0.22px;left:1305.5px;">Дозволено</div>
<svg class="a" style="left:1486px;top:218px" width="10" height="7" viewBox="0 0 10 7"><path d="M1 1 L5 5.2 L9 1" fill="none" stroke="#000" stroke-width="1.8"/></svg>
<div class="a t" style="top:235.84px;font-size:12px;line-height:12px;font-weight:700;color:#5a5a5a;letter-spacing:0.395px;right:599px;margin-right:-0.395px;">Відкріплення чека від нарахувань:</div>
<div class="a" style="left:1301px;top:235px;width:13px;height:13px"><svg width="13" height="13" viewBox="0 0 13 13"><rect x="0" y="0" width="13" height="13" rx="2.5" fill="#1f73f5"/><path d="M2.4 6.9 L5.3 9.9 L10.4 3" fill="none" stroke="#fff" stroke-width="1.8"/></svg></div>
<div class="a t" style="top:253.84px;font-size:12px;line-height:12px;font-weight:700;color:#5a5a5a;letter-spacing:0.32px;right:599px;margin-right:-0.32px;">Повідомляти про бронювання з сайту:</div>
<div class="a" style="left:1301px;top:253px;width:13px;height:13px"><svg width="13" height="13" viewBox="0 0 13 13"><rect x="0" y="0" width="13" height="13" rx="2.5" fill="#1f73f5"/><path d="M2.4 6.9 L5.3 9.9 L10.4 3" fill="none" stroke="#fff" stroke-width="1.8"/></svg></div>
<div class="a t" style="top:271.84px;font-size:12px;line-height:12px;font-weight:700;color:#5a5a5a;letter-spacing:0.45px;right:599px;margin-right:-0.45px;">Редагування проживаючих гостей в групі:</div>
<div class="a" style="left:1301px;top:271px;width:13px;height:13px"><svg width="13" height="13" viewBox="0 0 13 13"><rect x="0" y="0" width="13" height="13" rx="2.5" fill="#1f73f5"/><path d="M2.4 6.9 L5.3 9.9 L10.4 3" fill="none" stroke="#fff" stroke-width="1.8"/></svg></div>
<div class="a t" style="top:289.84px;font-size:12px;line-height:12px;font-weight:700;color:#5a5a5a;letter-spacing:0.5px;right:599px;margin-right:-0.5px;">Корпоративний менеджер:</div>
<div class="a" style="left:1301px;top:289px;width:13px;height:13px"><svg width="13" height="13" viewBox="0 0 13 13"><rect x="0" y="0" width="13" height="13" rx="2.5" fill="#1f73f5"/><path d="M2.4 6.9 L5.3 9.9 L10.4 3" fill="none" stroke="#fff" stroke-width="1.8"/></svg></div>
<div class="a t" style="top:307.84px;font-size:12px;line-height:12px;font-weight:700;color:#5a5a5a;letter-spacing:0.385px;right:599px;margin-right:-0.385px;">Дозвіл повернення оплати будь-якими типами:</div>
<div class="a" style="left:1301px;top:307px;width:13px;height:13px"><svg width="13" height="13" viewBox="0 0 13 13"><rect x="0" y="0" width="13" height="13" rx="2.5" fill="#1f73f5"/><path d="M2.4 6.9 L5.3 9.9 L10.4 3" fill="none" stroke="#fff" stroke-width="1.8"/></svg></div>
<div class="a t" style="top:325.84px;font-size:12px;line-height:12px;font-weight:700;color:#5a5a5a;letter-spacing:0.39px;right:599px;margin-right:-0.39px;">Період для редагування графіка роботи покоївок</div>
<div class="a t" style="top:339.84px;font-size:12px;line-height:12px;font-weight:700;color:#5a5a5a;letter-spacing:0.35px;right:599px;margin-right:-0.35px;">заднім числом:</div>
<div class="a" style="left:1301px;top:330px;width:50px;height:17px;background:#fffcf6;border:1px solid #e0dcd4"></div>
<div class="a t" style="top:333.08px;font-size:11.6px;line-height:11.6px;font-weight:400;color:#000;letter-spacing:0.22px;left:1305.5px;">0</div>
<div class="a t" style="top:357.84px;font-size:12px;line-height:12px;font-weight:700;color:#5a5a5a;letter-spacing:0.38px;right:599px;margin-right:-0.38px;">Дозволити редагувати права ролей та</div>
<div class="a t" style="top:371.84px;font-size:12px;line-height:12px;font-weight:700;color:#5a5a5a;letter-spacing:0.35px;right:599px;margin-right:-0.35px;">користувачів:</div>
<div class="a" style="left:1301px;top:364px;width:13px;height:13px"><svg width="13" height="13" viewBox="0 0 13 13"><rect x="0" y="0" width="13" height="13" rx="2.5" fill="#1f73f5"/><path d="M2.4 6.9 L5.3 9.9 L10.4 3" fill="none" stroke="#fff" stroke-width="1.8"/></svg></div>
<div class="a t" style="top:389.84px;font-size:12px;line-height:12px;font-weight:700;color:#5a5a5a;letter-spacing:0.32px;right:599px;margin-right:-0.32px;">Дозволити створення ролей та користувачів:</div>
<div class="a" style="left:1301px;top:389px;width:13px;height:13px"><svg width="13" height="13" viewBox="0 0 13 13"><rect x="0" y="0" width="13" height="13" rx="2.5" fill="#1f73f5"/><path d="M2.4 6.9 L5.3 9.9 L10.4 3" fill="none" stroke="#fff" stroke-width="1.8"/></svg></div>
<div class="a t" style="top:409.84px;font-size:12px;line-height:12px;font-weight:700;color:#5a5a5a;letter-spacing:0.2px;right:599px;margin-right:-0.2px;">Рівень доступу:</div>
<div class="a" style="left:1301px;top:406px;width:50px;height:17px;background:#fffcf6;border:1px solid #e0dcd4"></div>
<div class="a t" style="top:409.08px;font-size:11.6px;line-height:11.6px;font-weight:400;color:#000;letter-spacing:0.22px;left:1305.5px;">0</div>
<div class="a t" style="top:428.84px;font-size:12px;line-height:12px;font-weight:700;color:#5a5a5a;letter-spacing:0.35px;right:599px;margin-right:-0.35px;">Доступ до анкет по всіх готелях:</div>
<div class="a" style="left:1301px;top:428px;width:13px;height:13px"><svg width="13" height="13" viewBox="0 0 13 13"><rect x="0" y="0" width="13" height="13" rx="2.5" fill="#1f73f5"/><path d="M2.4 6.9 L5.3 9.9 L10.4 3" fill="none" stroke="#fff" stroke-width="1.8"/></svg></div>
<div class="a t" style="top:446.84px;font-size:12px;line-height:12px;font-weight:700;color:#5a5a5a;letter-spacing:0.35px;right:599px;margin-right:-0.35px;">Дозволити додавання до чорного списку:</div>
<div class="a" style="left:1301px;top:446px;width:13px;height:13px"><svg width="13" height="13" viewBox="0 0 13 13"><rect x="0" y="0" width="13" height="13" rx="2.5" fill="#1f73f5"/><path d="M2.4 6.9 L5.3 9.9 L10.4 3" fill="none" stroke="#fff" stroke-width="1.8"/></svg></div>
<div class="a t" style="top:465.84px;font-size:12px;line-height:12px;font-weight:700;color:#5a5a5a;letter-spacing:0.38px;right:599px;margin-right:-0.38px;">Дозволити видалення автоматично</div>
<div class="a t" style="top:479.84px;font-size:12px;line-height:12px;font-weight:700;color:#5a5a5a;letter-spacing:0.44px;right:599px;margin-right:-0.44px;">розрахованих надбавок:</div>
<div class="a" style="left:1301px;top:471px;width:13px;height:13px"><svg width="13" height="13" viewBox="0 0 13 13"><rect x="0" y="0" width="13" height="13" rx="2.5" fill="#1f73f5"/><path d="M2.4 6.9 L5.3 9.9 L10.4 3" fill="none" stroke="#fff" stroke-width="1.8"/></svg></div>
<div class="a" style="left:970px;top:512px;width:908px;height:328px;border:1px solid #707070"></div>
<div class="a" style="left:1715px;top:506px;width:152px;height:12px;background:#fff"></div>
<div class="a t" style="top:506.84px;font-size:12px;line-height:12px;font-weight:700;color:#5a5a66;letter-spacing:0.3px;right:31px;margin-right:-0.3px;">Права ролі для модулів</div>
<div class="a" style="left:987px;top:535px;width:9px;height:9px;background:linear-gradient(#fff 40%,#e4dccc);border:1px solid #6e9ed8;border-radius:1.5px"></div>
<div class="a" style="left:989px;top:539px;width:5px;height:1px;background:#000"></div>
<div class="a" style="left:991px;top:537px;width:1px;height:5px;background:#000"></div>
<div class="a" style="left:1005px;top:533px;width:13px;height:13px"><svg width="13" height="13" viewBox="0 0 13 13"><rect x="0" y="0" width="13" height="13" rx="2.5" fill="#1f73f5"/><path d="M2.4 6.9 L5.3 9.9 L10.4 3" fill="none" stroke="#fff" stroke-width="1.8"/></svg></div>
<div class="a t" style="top:536.25px;font-size:12.7px;line-height:12.7px;font-weight:700;color:#555;left:1018px;">Базовий</div>
<div class="a" style="left:987px;top:555px;width:9px;height:9px;background:linear-gradient(#fff 40%,#e4dccc);border:1px solid #6e9ed8;border-radius:1.5px"></div>
<div class="a" style="left:989px;top:559px;width:5px;height:1px;background:#000"></div>
<div class="a" style="left:991px;top:557px;width:1px;height:5px;background:#000"></div>
<div class="a" style="left:1005px;top:553px;width:13px;height:13px"><svg width="13" height="13" viewBox="0 0 13 13"><rect x="0" y="0" width="13" height="13" rx="2.5" fill="#1f73f5"/><path d="M2.4 6.9 L5.3 9.9 L10.4 3" fill="none" stroke="#fff" stroke-width="1.8"/></svg></div>
<div class="a t" style="top:556.25px;font-size:12.7px;line-height:12.7px;font-weight:700;color:#555;left:1018px;">Продаж</div>
<div class="a" style="left:987px;top:575px;width:9px;height:9px;background:linear-gradient(#fff 40%,#e4dccc);border:1px solid #6e9ed8;border-radius:1.5px"></div>
<div class="a" style="left:989px;top:579px;width:5px;height:1px;background:#000"></div>
<div class="a" style="left:991px;top:577px;width:1px;height:5px;background:#000"></div>
<div class="a" style="left:1005px;top:573px;width:13px;height:13px"><svg width="13" height="13" viewBox="0 0 13 13"><rect x="0" y="0" width="13" height="13" rx="2.5" fill="#1f73f5"/><path d="M2.4 6.9 L5.3 9.9 L10.4 3" fill="none" stroke="#fff" stroke-width="1.8"/></svg></div>
<div class="a t" style="top:576.25px;font-size:12.7px;line-height:12.7px;font-weight:700;color:#555;left:1018px;">Бухгалтерія</div>
<div class="a" style="left:987px;top:595px;width:9px;height:9px;background:linear-gradient(#fff 40%,#e4dccc);border:1px solid #6e9ed8;border-radius:1.5px"></div>
<div class="a" style="left:989px;top:599px;width:5px;height:1px;background:#000"></div>
<div class="a" style="left:991px;top:597px;width:1px;height:5px;background:#000"></div>
<div class="a" style="left:1005px;top:593px;width:13px;height:13px"><svg width="13" height="13" viewBox="0 0 13 13"><rect x="0" y="0" width="13" height="13" rx="2.5" fill="#1f73f5"/><path d="M2.4 6.9 L5.3 9.9 L10.4 3" fill="none" stroke="#fff" stroke-width="1.8"/></svg></div>
<div class="a t" style="top:596.25px;font-size:12.7px;line-height:12.7px;font-weight:700;color:#555;left:1018px;">Секретар</div>
<div class="a" style="left:987px;top:615px;width:9px;height:9px;background:linear-gradient(#fff 40%,#e4dccc);border:1px solid #6e9ed8;border-radius:1.5px"></div>
<div class="a" style="left:989px;top:619px;width:5px;height:1px;background:#000"></div>
<div class="a" style="left:1005px;top:613px;width:13px;height:13px"><svg width="13" height="13" viewBox="0 0 13 13"><rect x="0" y="0" width="13" height="13" rx="2.5" fill="#1f73f5"/><path d="M2.4 6.9 L5.3 9.9 L10.4 3" fill="none" stroke="#fff" stroke-width="1.8"/></svg></div>
<div class="a t" style="top:616.25px;font-size:12.7px;line-height:12.7px;font-weight:700;color:#555;left:1018px;">CRM</div>
<div class="a" style="left:1045px;top:633px;width:13px;height:13px"><svg width="13" height="13" viewBox="0 0 13 13"><rect x="0" y="0" width="13" height="13" rx="2.5" fill="#1f73f5"/><path d="M2.4 6.9 L5.3 9.9 L10.4 3" fill="none" stroke="#fff" stroke-width="1.8"/></svg></div>
<div class="a t" style="top:636.87px;font-size:11.85px;line-height:11.85px;font-weight:400;color:#555;letter-spacing:0.02px;left:1057.6px;">Контакти</div>
<div class="a" style="left:1045px;top:653px;width:13px;height:13px"><svg width="13" height="13" viewBox="0 0 13 13"><rect x="0" y="0" width="13" height="13" rx="2.5" fill="#1f73f5"/><path d="M2.4 6.9 L5.3 9.9 L10.4 3" fill="none" stroke="#fff" stroke-width="1.8"/></svg></div>
<div class="a t" style="top:656.87px;font-size:11.85px;line-height:11.85px;font-weight:400;color:#555;letter-spacing:0.02px;left:1057.6px;">Замовлення</div>
<div class="a" style="left:1045px;top:673px;width:13px;height:13px"><svg width="13" height="13" viewBox="0 0 13 13"><rect x="0" y="0" width="13" height="13" rx="2.5" fill="#1f73f5"/><path d="M2.4 6.9 L5.3 9.9 L10.4 3" fill="none" stroke="#fff" stroke-width="1.8"/></svg></div>
<div class="a t" style="top:676.87px;font-size:11.85px;line-height:11.85px;font-weight:400;color:#555;letter-spacing:0.02px;left:1057.6px;">Завдання</div>
<div class="a" style="left:1045px;top:693px;width:13px;height:13px"><svg width="13" height="13" viewBox="0 0 13 13"><rect x="0" y="0" width="13" height="13" rx="2.5" fill="#1f73f5"/><path d="M2.4 6.9 L5.3 9.9 L10.4 3" fill="none" stroke="#fff" stroke-width="1.8"/></svg></div>
<div class="a t" style="top:696.87px;font-size:11.85px;line-height:11.85px;font-weight:400;color:#555;letter-spacing:0.02px;left:1057.6px;">Компанії</div>
<div class="a" style="left:1045px;top:713px;width:13px;height:13px"><svg width="13" height="13" viewBox="0 0 13 13"><rect x="0" y="0" width="13" height="13" rx="2.5" fill="#1f73f5"/><path d="M2.4 6.9 L5.3 9.9 L10.4 3" fill="none" stroke="#fff" stroke-width="1.8"/></svg></div>
<div class="a t" style="top:716.87px;font-size:11.85px;line-height:11.85px;font-weight:400;color:#555;letter-spacing:0.02px;left:1057.6px;">Повідомлення</div>
<div class="a" style="left:1045px;top:733px;width:13px;height:13px"><svg width="13" height="13" viewBox="0 0 13 13"><rect x="0" y="0" width="13" height="13" rx="2.5" fill="#1f73f5"/><path d="M2.4 6.9 L5.3 9.9 L10.4 3" fill="none" stroke="#fff" stroke-width="1.8"/></svg></div>
<div class="a t" style="top:736.87px;font-size:11.85px;line-height:11.85px;font-weight:400;color:#555;letter-spacing:0.02px;left:1057.6px;">Програма лояльності</div>
<div class="a" style="left:1045px;top:753px;width:13px;height:13px"><svg width="13" height="13" viewBox="0 0 13 13"><rect x="0" y="0" width="13" height="13" rx="2.5" fill="#1f73f5"/><path d="M2.4 6.9 L5.3 9.9 L10.4 3" fill="none" stroke="#fff" stroke-width="1.8"/></svg></div>
<div class="a t" style="top:756.87px;font-size:11.85px;line-height:11.85px;font-weight:400;color:#555;letter-spacing:0.02px;left:1057.6px;">Різне</div>
<div class="a" style="left:1045px;top:773px;width:13px;height:13px"><svg width="13" height="13" viewBox="0 0 13 13"><rect x="0" y="0" width="13" height="13" rx="2.5" fill="#1f73f5"/><path d="M2.4 6.9 L5.3 9.9 L10.4 3" fill="none" stroke="#fff" stroke-width="1.8"/></svg></div>
<div class="a t" style="top:776.87px;font-size:11.85px;line-height:11.85px;font-weight:400;color:#555;letter-spacing:0.02px;left:1057.6px;">Статистика</div>
<div class="a" style="left:987px;top:795px;width:9px;height:9px;background:linear-gradient(#fff 40%,#e4dccc);border:1px solid #6e9ed8;border-radius:1.5px"></div>
<div class="a" style="left:989px;top:799px;width:5px;height:1px;background:#000"></div>
<div class="a" style="left:991px;top:797px;width:1px;height:5px;background:#000"></div>
<div class="a" style="left:1005px;top:793px;width:13px;height:13px"><svg width="13" height="13" viewBox="0 0 13 13"><rect x="0" y="0" width="13" height="13" rx="2.5" fill="#1f73f5"/><path d="M2.4 6.9 L5.3 9.9 L10.4 3" fill="none" stroke="#fff" stroke-width="1.8"/></svg></div>
<div class="a t" style="top:796.25px;font-size:12.7px;line-height:12.7px;font-weight:700;color:#555;left:1018px;">Звіти</div>
<div class="a" style="left:987px;top:815px;width:9px;height:9px;background:linear-gradient(#fff 40%,#e4dccc);border:1px solid #6e9ed8;border-radius:1.5px"></div>
<div class="a" style="left:989px;top:819px;width:5px;height:1px;background:#000"></div>
<div class="a" style="left:991px;top:817px;width:1px;height:5px;background:#000"></div>
<div class="a" style="left:1005px;top:813px;width:13px;height:13px"><svg width="13" height="13" viewBox="0 0 13 13"><rect x="0" y="0" width="13" height="13" rx="2.5" fill="#1f73f5"/><path d="M2.4 6.9 L5.3 9.9 L10.4 3" fill="none" stroke="#fff" stroke-width="1.8"/></svg></div>
<div class="a t" style="top:816.25px;font-size:12.7px;line-height:12.7px;font-weight:700;color:#555;left:1018px;">Налаштування</div>
<svg class="a" style="left:1170px;top:700px" width="230" height="60" viewBox="1170 700 230 60"><path d="M1385.2 711.6 L1197 739.6" stroke="#fd0000" stroke-width="3.3" stroke-linecap="round"/><path d="M1183.8 742.6 L1198 736 L1199.4 744.9 Z" fill="#fd0000" stroke="#fd0000" stroke-width="0.6" stroke-linejoin="round"/></svg>
</body></html>
